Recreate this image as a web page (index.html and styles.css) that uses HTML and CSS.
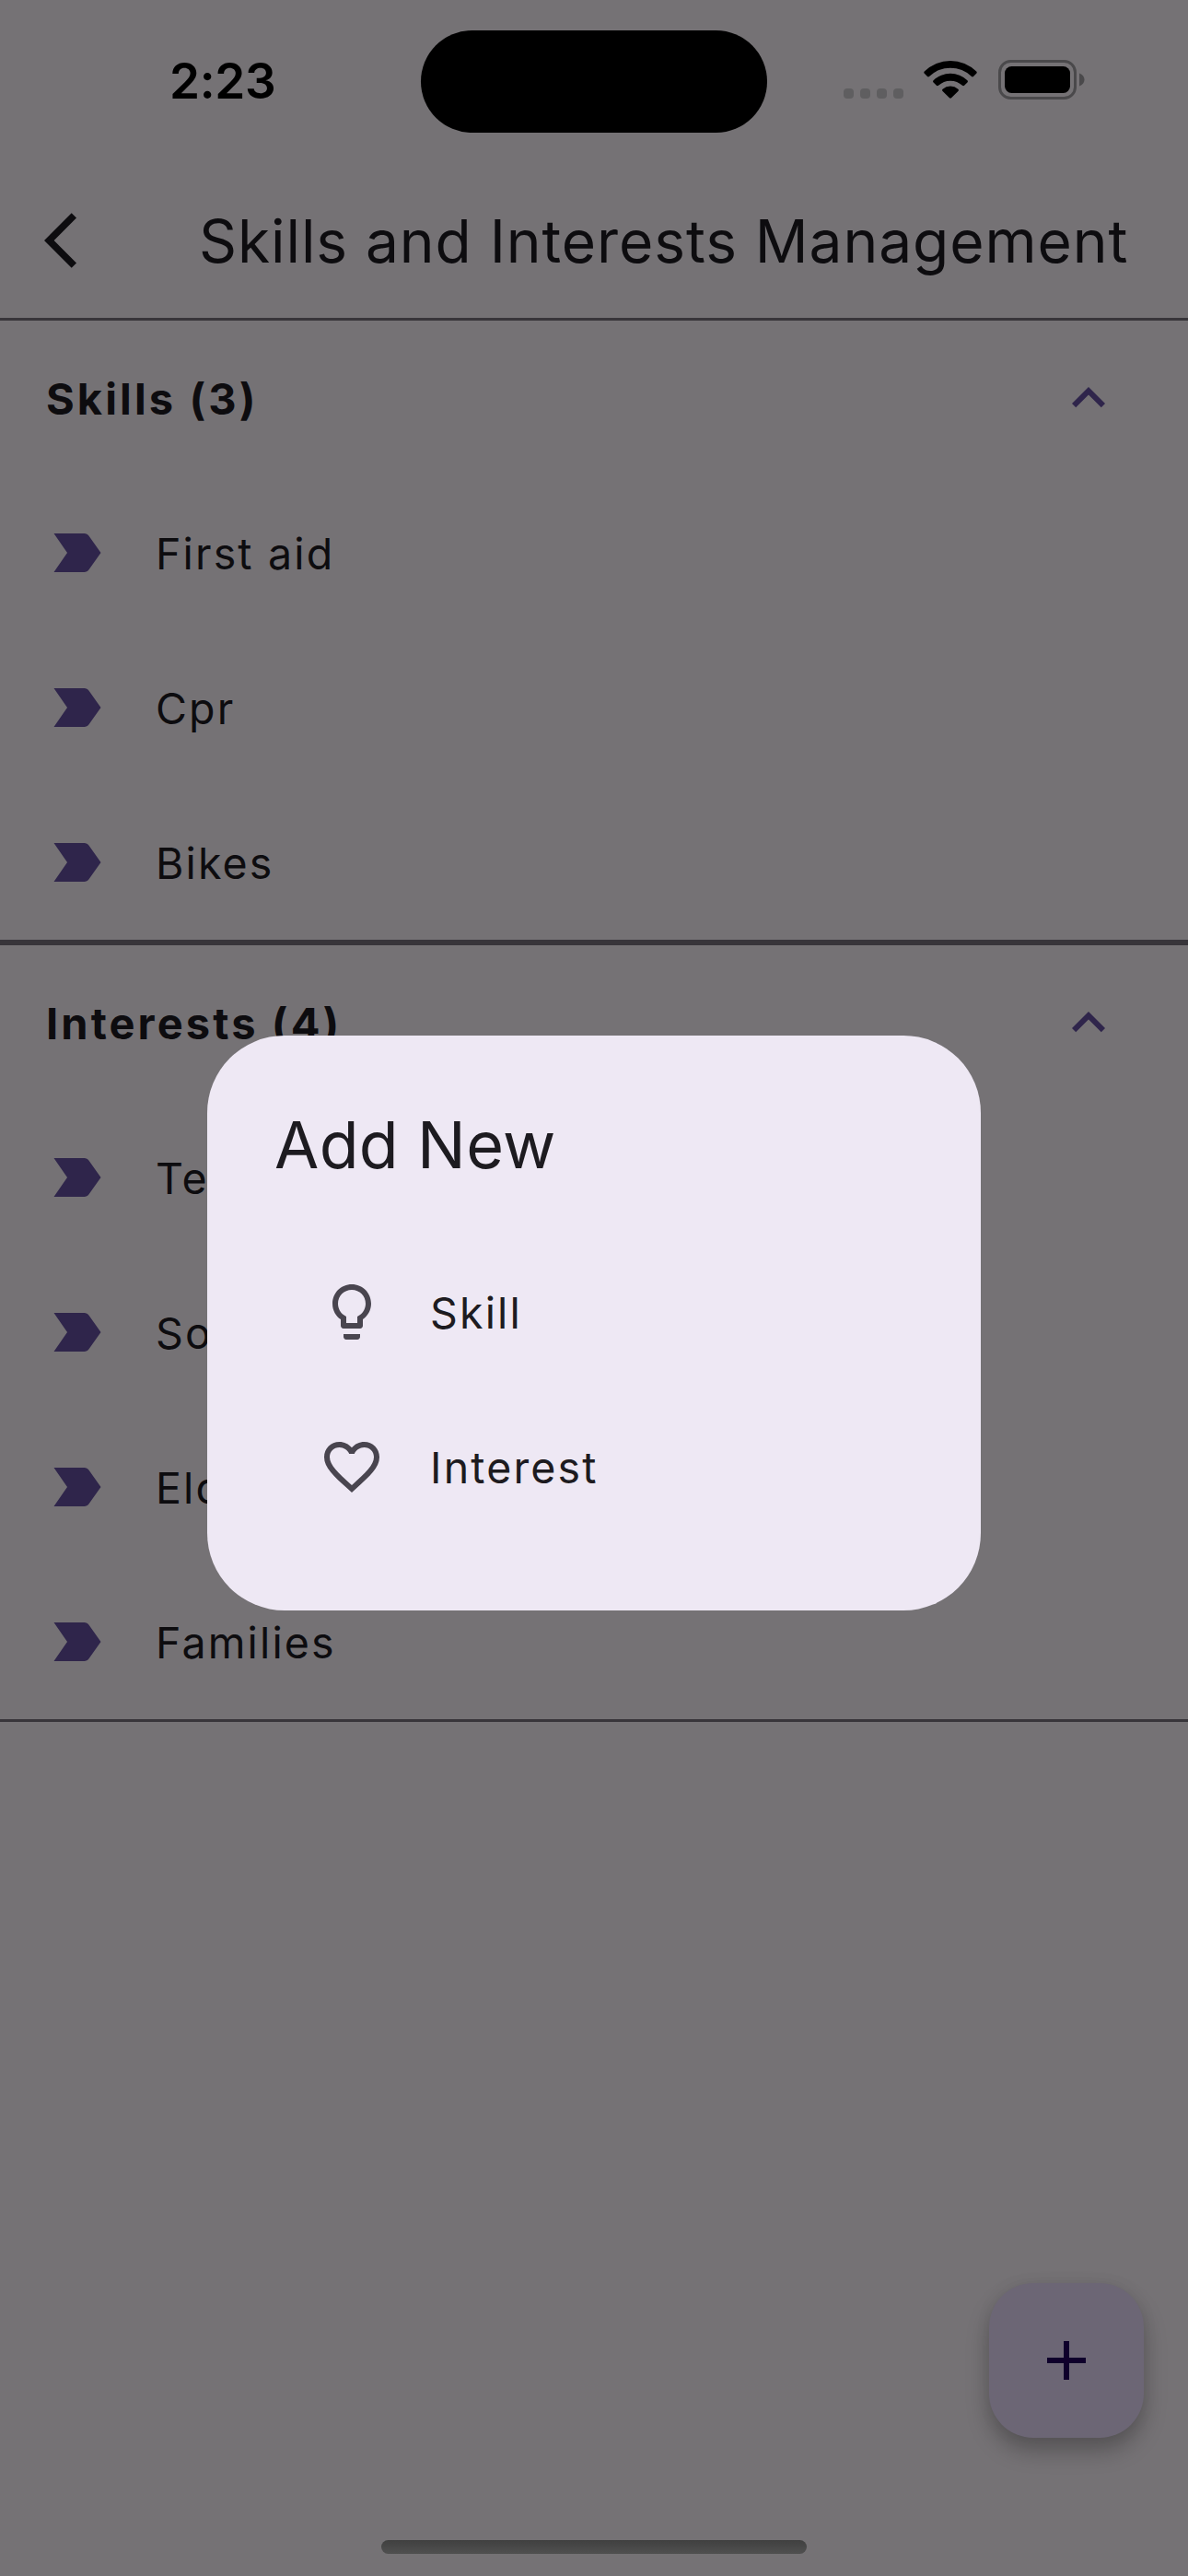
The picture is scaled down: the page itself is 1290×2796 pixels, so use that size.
FILE: index.html
```
<!DOCTYPE html>
<html lang="en">
<head>
<meta charset="utf-8">
<title>Skills and Interests Management</title>
<link rel="stylesheet" href="styles.css">
</head>
<body>
<svg width="0" height="0" class="defs" aria-hidden="true">
  <symbol id="label" viewBox="0 0 24 24"><path d="M3.5 18.99l11 .01c.67 0 1.27-.33 1.63-.84L20.5 12l-4.37-6.16c-.36-.51-.96-.84-1.63-.84l-11 .01L8.34 12z"/></symbol>
  <symbol id="chevron-up" viewBox="0 0 24 24"><path d="M12 8l-6 6 1.41 1.41L12 10.83l4.59 4.58L18 14z"/></symbol>
</svg>
<div class="screen">
  <div class="status-bar">
    <div class="time">2:23</div>
    <div class="island"></div>
    <div class="indicators">
      <div class="dots"><i></i><i></i><i></i><i></i></div>
      <svg class="wifi" viewBox="0 0 58 42">
        <path d="M0.8 12.6a40 40 0 0 1 56.4 0c.7.7.7 1.5 0 2.2l-3.2 3.2c-.6.6-1.4.6-2 0a33 33 0 0 0-46 0c-.6.6-1.4.6-2 0l-3.2-3.2c-.7-.7-.7-1.5 0-2.2z"/>
        <path d="M10.600 22.300a26.500 26.500 0 0 1 36.800 0c.7.7.7 1.500 0 2.200l-3.300 3.300c-.6.6-1.400.6-2.100 0a19 19 0 0 0-26 0c-.7.6-1.500.6-2.100 0l-3.300-3.300c-.7-.7-.7-1.500 0-2.200z"/>
        <path d="M20.600 31.700a13 13 0 0 1 16.800 0c.7.6.7 1.500 0 2.200l-7.400 7.400c-.6.6-1.400.6-2 0l-7.400-7.400c-.7-.7-.7-1.600 0-2.200z"/>
      </svg>
      <svg class="battery" viewBox="0 0 95 43">
        <rect x="1.500" y="1.500" width="82" height="40" rx="12" fill="none" stroke="#4a494b" stroke-width="3"/>
        <rect x="7" y="7" width="71" height="29" rx="7.500"/>
        <path d="M88 14.500c3.500 1.200 5.500 4 5.500 7s-2 5.800-5.500 7z" fill="#4a494b"/>
      </svg>
    </div>
  </div>
  <header class="app-bar">
    <svg class="back" viewBox="0 0 12 24"><path d="M11.67 3.87L9.9 2.1 0 12l9.9 9.9 1.77-1.77L3.54 12z"/></svg>
    <h1>Skills and Interests Management</h1>
  </header>
  <section class="group">
    <div class="group-head"><h2>Skills (3)</h2><svg class="icon"><use href="#chevron-up"/></svg></div>
    <div class="row"><svg class="icon"><use href="#label"/></svg><span>First aid</span></div>
    <div class="row"><svg class="icon"><use href="#label"/></svg><span>Cpr</span></div>
    <div class="row"><svg class="icon"><use href="#label"/></svg><span>Bikes</span></div>
  </section>
  <section class="group">
    <div class="group-head"><h2>Interests (4)</h2><svg class="icon"><use href="#chevron-up"/></svg></div>
    <div class="row"><svg class="icon"><use href="#label"/></svg><span>Te</span></div>
    <div class="row"><svg class="icon"><use href="#label"/></svg><span>So</span></div>
    <div class="row"><svg class="icon"><use href="#label"/></svg><span>Eld</span></div>
    <div class="row"><svg class="icon"><use href="#label"/></svg><span>Families</span></div>
  </section>
  <div class="fab"><svg class="icon" viewBox="0 0 24 24"><path d="M19 13h-6v6h-2v-6H5v-2h6V5h2v6h6z"/></svg></div>
  <div class="home-indicator"></div>
  <div class="overlay">
    <div class="dialog">
      <h3>Add New</h3>
      <div class="option">
        <svg class="icon" viewBox="0 0 24 24"><path d="M9 21c0 .5.4 1 1 1h4c.6 0 1-.5 1-1v-1H9v1zm3-19C8.100 2 5 5.100 5 9c0 2.400 1.200 4.500 3 5.700V17c0 .5.4 1 1 1h6c.6 0 1-.5 1-1v-2.300c1.800-1.300 3-3.400 3-5.700 0-3.900-3.100-7-7-7zm2.900 11.100l-.9.6V16h-4v-2.300l-.9-.6C7.800 12.200 7 10.600 7 9c0-2.800 2.200-5 5-5s5 2.200 5 5c0 1.600-.8 3.200-2.100 4.100z"/></svg>
        <span>Skill</span>
      </div>
      <div class="option">
        <svg class="icon" viewBox="0 0 24 24"><path d="M16.500 3c-1.740 0-3.410.81-4.500 2.090C10.910 3.810 9.240 3 7.500 3 4.420 3 2 5.420 2 8.500c0 3.780 3.400 6.860 8.550 11.540L12 21.350l1.450-1.320C18.600 15.360 22 12.280 22 8.500 22 5.420 19.580 3 16.500 3zm-4.400 15.550l-.1.1-.1-.1C7.140 14.240 4 11.390 4 8.500 4 6.500 5.500 5 7.500 5c1.540 0 3.040.99 3.570 2.360h1.870C13.460 5.990 14.960 5 16.500 5c2 0 3.500 1.500 3.500 3.500 0 2.890-3.140 5.740-7.900 10.050z"/></svg>
        <span>Interest</span>
      </div>
    </div>
  </div>
</div>
</body>
</html>
```
FILE: styles.css
```
* { box-sizing: border-box; }
body { margin: 0; font-family: Inter, "Liberation Sans", sans-serif; color: #0d0c0f; }
h1, h2, h3 { margin: 0; font-weight: 400; }
.defs { position: absolute; }
.icon { display: block; width: 72px; height: 72px; flex: none; }

.screen {
  position: relative;
  width: 1290px;
  height: 2796px;
  overflow: hidden;
  background: #757275;
}

.status-bar {
  display: grid;
  grid-template-columns: 457px 376px 1fr;
  height: 177px;
  padding-top: 33px;
  align-items: start;
  color: #000;
}
.time {
  padding: 22px 0 0 184px;
  font-size: 53px;
  line-height: 66px;
  font-weight: 600;
  letter-spacing: -0.3px;
}
.island { height: 111px; border-radius: 56px; background: #000; }
.indicators { display: flex; padding: 32px 0 0 83px; }
.dots { display: flex; gap: 7px; padding-top: 31px; }
.dots i { width: 11px; height: 11px; border-radius: 4px; background: #5f5e60; }
.wifi { width: 58px; height: 42px; margin-left: 22px; }
.battery { width: 95px; height: 43px; margin-left: 23px; }

.app-bar {
  display: flex;
  align-items: center;
  height: 168px;
  padding-left: 48px;
}
.back { width: 36px; height: 72px; fill: #0d0c0f; }
.app-bar h1 {
  margin-left: 132px;
  padding-top: 1px;
  font-size: 64px;
  line-height: 84px;
  letter-spacing: 0.93px;
  white-space: nowrap;
}

.group { border-top: 3px solid #38353a; border-bottom: 3px solid #38353a; }
.group-head, .row { display: flex; align-items: center; height: 168px; }
.group-head { justify-content: space-between; padding: 0 72px 0 50px; fill: #2f254b; }
.group-head h2 {
  padding-top: 1px;
  font-size: 47px;
  line-height: 72px;
  font-weight: 670;
  letter-spacing: 3.1px;
  white-space: nowrap;
}
.row { gap: 49px; padding: 0 48px; fill: #2f254b; }
.row span, .option span {
  padding-top: 1px;
  font-size: 46.5px;
  line-height: 72px;
  letter-spacing: 2.15px;
}
.option span { padding-top: 2px; }

.fab {
  position: absolute;
  right: 48px;
  bottom: 150px;
  display: grid;
  place-items: center;
  width: 168px;
  height: 168px;
  border-radius: 48px;
  background: #6c6675;
  fill: #0f002b;
  box-shadow: 0 14px 24px rgba(0,0,0,.26), 0 0 18px rgba(0,0,0,.05);
}
.home-indicator {
  position: absolute;
  left: 414px;
  bottom: 24px;
  width: 462px;
  height: 15px;
  border-radius: 8px;
  background: linear-gradient(#404040, #505050);
}

.overlay {
  position: absolute;
  inset: 75px 0 0;
  display: flex;
  align-items: center;
  justify-content: center;
}
.dialog {
  width: 840px;
  height: 624px;
  padding: 71px 72px 72px 73px;
  border-radius: 84px;
  background: #eee8f4;
  color: #1d1b20;
}
.dialog h3 { margin-bottom: 49px; font-size: 70px; line-height: 96px; letter-spacing: 0.35px; }
.option { display: flex; align-items: center; gap: 49px; height: 168px; padding-left: 48px; fill: #49454f; }
```
